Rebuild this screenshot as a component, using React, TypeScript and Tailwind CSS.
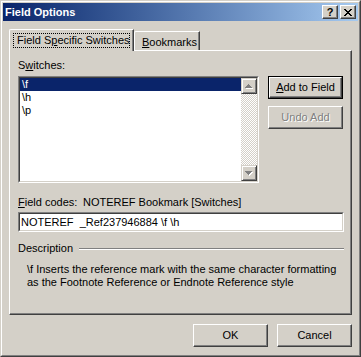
import React from "react";

function Btn({
  children,
  isDefault,
  disabled,
  className = "",
}: {
  children: React.ReactNode;
  isDefault?: boolean;
  disabled?: boolean;
  className?: string;
}) {
  if (isDefault) {
    return (
      <div className={`w-[75px] h-[23px] border border-black ${className}`}>
        <div className="h-full border border-t-white border-l-white border-r-[#404040] border-b-[#404040] shadow-[inset_-1px_-1px_#808080] flex items-center justify-center">
          {children}
        </div>
      </div>
    );
  }
  return (
    <div
      className={`w-[75px] h-[23px] border border-t-white border-l-white border-r-[#404040] border-b-[#404040] shadow-[inset_-1px_-1px_#808080] flex items-center justify-center ${className}`}
    >
      <span className={disabled ? "text-[#808080] [text-shadow:1px_1px_0_#ffffff]" : ""}>{children}</span>
    </div>
  );
}

function U({ children }: { children: React.ReactNode }) {
  return <span className="underline underline-offset-[1px]">{children}</span>;
}

function TitleBtn({ children, className = "" }: { children: React.ReactNode; className?: string }) {
  return (
    <div
      className={`w-[16px] h-[14px] bg-[#d4d0c8] border border-t-white border-l-white border-r-[#404040] border-b-[#404040] shadow-[inset_-1px_-1px_#808080] flex items-center justify-center ${className}`}
    >
      {children}
    </div>
  );
}

function ScrollBtn({ down }: { down?: boolean }) {
  return (
    <div className="w-[16px] h-[16px] bg-[#d4d0c8] border border-t-[#d4d0c8] border-l-[#d4d0c8] border-r-[#404040] border-b-[#404040] shadow-[inset_1px_1px_#ffffff,inset_-1px_-1px_#808080] flex items-center justify-center">
      <svg width="8" height="5" viewBox="0 0 8 5" className="block">
        {down ? (
          <>
            <path d="M1 1h7v1H1zM2 2h5v1H2zM3 3h3v1H3zM4 4h1v1H4z" fill="#ffffff" />
            <path d="M0 0h7v1H0zM1 1h5v1H1zM2 2h3v1H2zM3 3h1v1H3z" fill="#808080" />
          </>
        ) : (
          <>
            <path d="M4 1h1v1H4zM3 2h3v1H3zM2 3h5v1H2zM1 4h7v1H1z" fill="#ffffff" />
            <path d="M3 0h1v1H3zM2 1h3v1H2zM1 2h5v1H1zM0 3h7v1H0z" fill="#808080" />
          </>
        )}
      </svg>
    </div>
  );
}

export default function App() {
  return (
    <div className="w-[361px] h-[357px] bg-[#d4d0c8] border border-t-[#d4d0c8] border-l-[#d4d0c8] border-r-[#404040] border-b-[#404040] font-['Liberation_Sans',Arial,sans-serif] text-[11px] leading-[13px] text-black select-none">
      <div className="h-full border border-t-white border-l-white border-r-[#808080] border-b-[#808080] p-px flex flex-col">
        {/* Title bar */}
        <div className="h-[18px] flex items-center bg-linear-to-r from-[#0a246a] to-[#a6caf0] pl-[2px] pr-[2px]">
          <span className="flex-1 text-white font-bold">Field Options</span>
          <TitleBtn>
            <span className="font-bold text-[11px] leading-none text-black">?</span>
          </TitleBtn>
          <TitleBtn className="ml-[2px]">
            <svg width="8" height="7" viewBox="0 0 8 7" className="block">
              <path d="M0 0h2v1H0zM6 0h2v1H6zM1 1h2v1H1zM5 1h2v1H5zM2 2h4v1H2zM3 3h2v1H3zM2 4h4v1H2zM1 5h2v1H1zM5 5h2v1H5zM0 6h2v1H0zM6 6h2v1H6z" fill="#000" />
            </svg>
          </TitleBtn>
        </div>

        <div className="flex-1 px-[6px] pt-[8px] flex flex-col">
          {/* Tabs */}
          <div className="h-[21px] flex items-end">
            <div className="relative z-10 w-[125px] h-[22px] -mb-px bg-[#d4d0c8] border-l border-t border-r border-l-white border-t-white border-r-[#404040] shadow-[inset_-1px_0_#808080] rounded-tl-[2px] pt-[3px] pl-[3px]">
              <div className="h-[15px] w-[117px] border border-dotted border-black pl-[3px] leading-[13px] whitespace-nowrap">
                Field S<U>p</U>ecific Switches
              </div>
            </div>
            <div className="w-[66px] h-[19px] border-l border-t border-r border-l-white border-t-white border-r-[#404040] shadow-[inset_-1px_0_#808080] rounded-tl-[2px] pl-[7px] pt-[4px] whitespace-nowrap">
              <U>B</U>ookmarks
            </div>
          </div>

          {/* Panel */}
          <div className="h-[265px] border border-t-white border-l-white border-r-[#404040] border-b-[#404040] shadow-[inset_-1px_-1px_#808080] pl-[8px] pr-[7px] pt-[8px] flex flex-col">
            <div className="h-[13px] whitespace-nowrap">
              S<U>w</U>itches:
            </div>
            <div className="mt-[4px] flex items-start">
              <div className="w-[241px] h-[107px] border border-t-[#808080] border-l-[#808080] border-r-white border-b-white">
                <div className="h-full border border-t-[#404040] border-l-[#404040] border-r-[#d4d0c8] border-b-[#d4d0c8] bg-white flex">
                  <div className="flex-1 flex flex-col">
                    <div className="h-[13px] bg-[#0a246a] text-white pl-[2px]">\f</div>
                    <div className="h-[13px] pl-[2px]">\h</div>
                    <div className="h-[13px] pl-[2px]">\p</div>
                  </div>
                  <div className="w-[16px] flex flex-col">
                    <ScrollBtn />
                    <div className="flex-1 bg-[image:repeating-conic-gradient(#ffffff_0_25%,#d4d0c8_0_50%)] bg-[length:2px_2px]" />
                    <ScrollBtn down />
                  </div>
                </div>
              </div>
              <div className="ml-[9px] flex flex-col">
                <Btn isDefault>
                  <span className="whitespace-nowrap">
                    <U>A</U>dd to Field
                  </span>
                </Btn>
                <Btn disabled className="mt-[7px]">
                  Undo Add
                </Btn>
              </div>
            </div>

            <div className="mt-[13px] h-[13px] flex">
              <div className="w-[65px] whitespace-nowrap">
                <U>F</U>ield codes:
              </div>
              <div className="whitespace-nowrap">NOTEREF Bookmark [Switches]</div>
            </div>

            <div className="mt-[3px] h-[20px] border border-t-[#808080] border-l-[#808080] border-r-white border-b-white">
              <div className="h-full border border-t-[#404040] border-l-[#404040] border-r-[#d4d0c8] border-b-[#d4d0c8] bg-white flex items-center pl-[1px] whitespace-pre">
                NOTEREF  _Ref237946884 \f \h
              </div>
            </div>

            <div className="mt-[10px] h-[13px] flex items-center">
              <span>Description</span>
              <div className="flex-1 ml-[6px] h-[2px] border-t border-t-[#808080] border-b border-b-white" />
            </div>

            <div className="mt-[8px] pl-[9px] whitespace-nowrap">
              \f Inserts the reference mark with the same character formatting
              <br />
              as the Footnote Reference or Endnote Reference style
            </div>
          </div>

          {/* Bottom buttons */}
          <div className="mt-[9px] flex justify-end">
            <Btn>OK</Btn>
            <Btn className="ml-[9px]">Cancel</Btn>
          </div>
        </div>
      </div>
    </div>
  );
}
